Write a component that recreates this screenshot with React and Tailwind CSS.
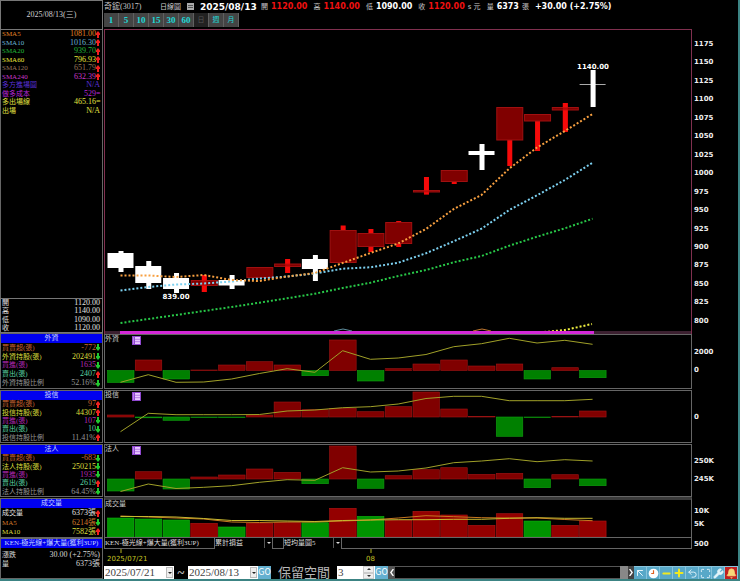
import { useState } from 'react'
import { ArrowUpLeft, Undo2, Maximize, Wrench, Bell, Minus, Plus } from 'lucide-react'

const SERIF = "font-['Liberation_Serif','Noto_Sans_CJK_TC',serif]"
const SANS = "font-['DejaVu_Sans','Noto_Sans_CJK_TC',sans-serif]"

// candle slots are shared by every plot
const STEP = 27.77
const cx = (i) => 120.5 + STEP * i
const points = (ys) => ys.map((y, i) => `${cx(i)},${y}`).join(' ')

const indicators = [
  ['SMA5', '1081.00', 'up', 'text-[#e08424]'],
  ['SMA10', '1016.30', 'up', 'text-[#69b4d4]'],
  ['SMA20', '939.70', 'up', 'text-[#20b838]'],
  ['SMA60', '796.93', 'up', 'text-[#e8e83c]'],
  ['SMA120', '651.79', 'up', 'text-[#96745a]'],
  ['SMA240', '632.39', 'up', 'text-[#c838c8]'],
  ['多方進場圖', 'N/A', '', 'text-[#5a30d8]'],
  ['做多成本', '529', 'eq', 'text-[#b828d8]'],
  ['多出場線', '465.16', 'eq', 'text-[#e0e040]'],
  ['出場', 'N/A', '', 'text-[#e0e040]'],
]

const prices = [
  ['開', '1120.00'],
  ['高', '1140.00'],
  ['低', '1090.00'],
  ['收', '1120.00'],
].map(([k, v]) => [k, v, null, 'text-[#e0e0e0]'])

const foreign = [
  ['買賣超(張)', '-772', 'down', 'text-[#c86432]'],
  ['外資持股(張)', '202491', 'down', 'text-[#dcdc3c]'],
  ['買進(張)', '1635', 'down', 'text-[#b428b4]'],
  ['賣出(張)', '2407', 'up', 'text-[#5ad2a0]'],
  ['外資持股比例', '52.16%', 'down', 'text-[#969696]'],
]

const trust = [
  ['買賣超(張)', '97', 'up', 'text-[#c86432]'],
  ['投信持股(張)', '44307', 'up', 'text-[#dcdc3c]'],
  ['買進(張)', '107', 'down', 'text-[#b428b4]'],
  ['賣出(張)', '10', 'down', 'text-[#5ad2a0]'],
  ['投信持股比例', '11.41%', 'up', 'text-[#969696]'],
]

const legal = [
  ['買賣超(張)', '-683', 'down', 'text-[#c86432]'],
  ['法人持股(張)', '250215', 'down', 'text-[#dcdc3c]'],
  ['買進(張)', '1935', 'down', 'text-[#b428b4]'],
  ['賣出(張)', '2619', 'up', 'text-[#5ad2a0]'],
  ['法人持股比例', '64.45%', 'down', 'text-[#969696]'],
]

const volume = [
  ['成交量', '6373張', 'up', 'text-[#e0e0e0]'],
  ['MA5', '6214張', 'down', 'text-[#d07828]'],
  ['MA10', '7582張', 'up', 'text-[#dcdc3c]'],
]

const strategy = [
  ['漲跌', '30.00 (+2.75%)', null, 'text-[#d8d8d8]'],
  ['量', '6373張', null, 'text-[#d8d8d8]'],
]

// [kind, body top, body bottom, high, low]
const candles = [
  ['w', 253, 268, 251, 272],
  ['w', 266, 283, 261, 289],
  ['w', 278, 289, 273, 293],
  ['r', 280, 286, 275, 292],
  ['w', 280, 285.5, 275, 289],
  ['r', 267, 278, 267, 278],
  ['r', 263.5, 267, 259, 273],
  ['w', 259, 269, 255, 281],
  ['r', 230, 263, 225.5, 263],
  ['r', 233, 247, 229, 252],
  ['r', 222, 244, 221, 247],
  ['r', 190, 192.5, 177, 194.5],
  ['r', 170, 182, 170, 184],
  ['w', 151, 155, 144, 170],
  ['r', 107, 140.5, 107, 166],
  ['r', 114, 121.5, 114, 151],
  ['r', 107, 110.5, 103, 132],
  ['w', 84, 85, 70, 107],
]

const sma5 = [275.5, 275.5, 277, 275, 280, 281, 276.5, 273, 263, 253, 243.5, 229, 209, 195, 168.5, 147.5, 131, 114]
const sma10 = [290.5, 287, 284.5, 283.5, 281.5, 278.5, 276.5, 273.5, 268.7, 267.3, 262.7, 253.3, 241.3, 228.7, 210, 195.3, 180, 162.7]
const sma20 = [323, 319, 315, 311, 307, 302.7, 298.3, 293.7, 288, 282.7, 276, 270, 262.3, 256, 245.7, 236.7, 228.3, 218.7]

const foreignBars = [382.5, 360, 379, 370, 365, 361.7, 365, 375.7, 340, 381, 368.7, 364, 360, 366, 364, 379, 367.7, 377.7]
const foreignLine = [382.3, 374.7, 382.3, 382, 379, 373.5, 368.7, 372.3, 350.7, 359.3, 358, 354.5, 346.7, 343.7, 338.3, 343, 340.3, 344.3]
const trustBars = [415, 417.8, 420.3, 417.5, 417.5, 415, 402, 409.7, 408.3, 411.7, 406.7, 392, 409, 416.4, 436.3, 417, 416.4, 411]
const trustLine = [431.7, 413.3, 414.7, 414.7, 414.7, 414.5, 411, 410, 407.7, 406.7, 404, 398.5, 396.3, 396.3, 400.7, 400.7, 400.7, 399.3]
const legalBars = [491, 471.7, 489, 477, 475, 469, 472.3, 483.7, 446, 488.3, 475.7, 469.7, 467.7, 474.3, 473.3, 487.7, 474.7, 485.7]
const legalLine = [491.5, 484, 488.5, 487.3, 485.7, 482.3, 479.7, 480.3, 467.7, 472, 471, 468, 462.7, 461, 458.7, 461.7, 459.7, 461]
const volumeTops = [518, 519, 520, 523.3, 527, 523.3, 522.7, 522.7, 508.3, 516.3, 520.3, 511.3, 515, 525.3, 513.7, 521, 525.3, 521]
const volumeKinds = 'GGGRGRRGRGRRRRRGRR'
const volumeMa5 = [516, 517, 518, 519, 522, 522.5, 522, 522, 521, 520, 518, 515.7, 516.7, 517.7, 518, 518, 519.5, 520.7]
const volumeMa10 = [516.5, 516.5, 517, 518.5, 520.5, 520.5, 521, 521.5, 520.5, 520, 519.7, 519.7, 519.3, 519.3, 518.3, 517.7, 518.3, 518.3]

function Trend({ dir }) {
  if (dir === 'eq') return <span className="w-1 text-center">=</span>
  if (!dir) return null
  return (
    <svg viewBox="0 0 4 7" className={dir === 'up' ? 'h-[7px] w-1 text-[#f02020]' : 'h-[7px] w-1 rotate-180 text-[#20c830]'}>
      <path d="M2 0 4 2.5V4H3V7H1V4H0V2.5Z" fill="currentColor" />
    </svg>
  )
}

function Rows({ items }) {
  return (
    <dl className="flex flex-1 flex-col justify-evenly">
      {items.map(([label, value, dir, color], i) => (
        <div key={i} className={`flex items-center justify-between pr-[2px] pl-px leading-[8px] whitespace-nowrap ${color}`}>
          <dt className="text-[7px]">{label}</dt>
          <dd className="flex items-center text-[8px]">
            {value}
            <Trend dir={dir} />
          </dd>
        </div>
      ))}
    </dl>
  )
}

function SideCard({ title, items, className }) {
  return (
    <section className={`flex shrink-0 flex-col border border-[#666] ${className}`}>
      <h2 className="h-[9px] shrink-0 overflow-hidden bg-[#0000f0] text-center text-[7px] leading-[9px] whitespace-nowrap text-[#c8d8ff]">{title}</h2>
      <Rows items={items} />
    </section>
  )
}

function Sidebar() {
  return (
    <aside className={`flex w-[103px] shrink-0 flex-col ${SERIF}`}>
      <div className="flex h-[30px] shrink-0 items-center justify-center border border-[#777] text-[8px] text-[#d0d0d0]">2025/08/13(三)</div>
      <section className="flex flex-1 flex-col border-x border-[#666]">
        <div className="flex h-[85px] flex-col">
          <Rows items={indicators} />
        </div>
      </section>
      <section className="flex h-[35px] shrink-0 flex-col border border-[#777]">
        <Rows items={prices} />
      </section>
      <SideCard title="外資" items={foreign} className="h-[56px]" />
      <SideCard title="投信" items={trust} className="mt-px h-[53px]" />
      <SideCard title="法人" items={legal} className="mt-px h-[53px]" />
      <SideCard title="成交量" items={volume} className="mt-px h-[40px]" />
      <section className="flex h-[41px] shrink-0 flex-col border border-[#666]">
        <h2 className="h-[9px] shrink-0 bg-[#0000f0] text-center text-[7px] leading-[9px] whitespace-nowrap text-[#c8d8ff]">KEN-極光線+爆大量(獲利3UP)</h2>
        <div className="mt-[3px] flex h-[17px] flex-col">
          <Rows items={strategy} />
        </div>
      </section>
    </aside>
  )
}

function Quote({ label, value, unit, red }) {
  return (
    <span className="flex items-center gap-[3px]">
      <span className="text-[7px] text-[#c8c8c8]">{label}</span>
      <b className={red ? 'text-[#f01010]' : 'text-white'}>{value}</b>
      {unit && <span className="text-[7px] text-[#c8c8c8]">{unit}</span>}
    </span>
  )
}

function Header({ period, setPeriod }) {
  return (
    <header className="flex h-[29px] shrink-0 flex-col whitespace-nowrap">
      <div className={`flex h-[13px] items-center gap-[6px] text-[8px] leading-[8px] ${SANS}`}>
        <h1 className={`w-[50px] text-[8px] text-[#c8c8c8] ${SERIF}`}>奇鋐(3017)</h1>
        <span className="text-[7px] text-[#d0d0d0]">日線圖</span>
        <svg viewBox="0 0 7 7" className="size-[7px]">
          <path d="M0 0h7v7H0z" fill="#aaa" />
          <path d="M1 2.5h5M1 4.5h5" stroke="#555" />
        </svg>
        <b className="w-[55px] text-[9px] text-white">2025/08/13</b>
        <Quote label="開" value="1120.00" red />
        <Quote label="高" value="1140.00" red />
        <Quote label="低" value="1090.00" />
        <Quote label="收" value="1120.00" unit="s 元" red />
        <Quote label="量" value="6373" unit="張" />
        <b className="text-white">+30.00 (+2.75%)</b>
      </div>
      <nav className="flex h-[14px]">
        {['1', '5', '10', '15', '30', '60', '日', '週', '月'].map((p) => (
          <button
            key={p}
            onClick={() => setPeriod(p)}
            className={`w-[15px] border-r border-[#606060] leading-[14px] ${SERIF} ${
              /\d/.test(p) ? 'text-[9px] font-bold' : 'text-[7px]'
            } ${p === period ? 'bg-[#222] text-[#555]' : 'bg-[#444] text-[#20d8d8]'}`}
          >
            {p}
          </button>
        ))}
      </nav>
    </header>
  )
}

function Axis({ labels, className }) {
  return (
    <div className={`flex w-[46px] shrink-0 flex-col pl-[2px] text-[7px] leading-[8px] font-bold text-[#eee] ${SANS} ${className}`}>
      {labels.map((l) => (
        <span key={l}>{l}</span>
      ))}
    </div>
  )
}

function PriceChart() {
  return (
    <div className="flex min-h-0 flex-1">
      <div className="min-w-0 flex-1 border border-b-0 border-[#80304f]">
        <svg viewBox="105 30 586 304" preserveAspectRatio="none" className="block h-full w-full">
          {candles.map(([kind, top, bottom, high, low], i) => (
            <g key={i}>
              {kind === 'w' ? (
                <>
                  <rect x={cx(i) - 13} y={top} width="26" height={bottom - top} fill={i === 17 ? '#aaa' : '#fff'} />
                  <rect x={cx(i) - 2} y={high} width="5" height={low - high} fill="#fff" />
                </>
              ) : (
                <>
                  <rect x={cx(i) - 2} y={high} width="5" height={low - high} fill="#f50a0a" />
                  <rect x={cx(i) - 12.5} y={top + 0.5} width="26" height={bottom - top - 1} fill="#800000" stroke="#a01010" strokeWidth="1" />
                  {bottom - top < 7 && <rect x={cx(i) - 2} y={high} width="5" height={low - high} fill="#f50a0a" fillOpacity="0.5" />}
                </>
              )}
            </g>
          ))}
          <g fill="none" strokeWidth="2" strokeDasharray="2 2">
            <polyline points={points(sma20)} stroke="#28c848" />
            <polyline points={points(sma10)} stroke="#7cd0f0" />
            <polyline points={points(sma5)} stroke="#f8a040" />
            <path d="M544 332 565 330 592 324" stroke="#f0f040" />
          </g>
          <path d="M105 332.5H691" stroke="#3c2030" strokeWidth="3" />
          <path d="M120 332.5H594" stroke="#d428d8" strokeWidth="3" />
          <path d="M334 331 343 329 352 331" stroke="#6090a0" fill="none" />
          <path d="M473 331 482 329 491 331" stroke="#c07830" fill="none" />
          <g fill="#fff" fontSize="7" fontWeight="bold" textAnchor="middle" fontFamily="DejaVu Sans, sans-serif">
            <text x="176" y="299">839.00</text>
            <text x="593" y="69">1140.00</text>
          </g>
        </svg>
      </div>
      <Axis
        className="justify-between pt-[11px] pb-[9px]"
        labels={[1175, 1150, 1125, 1100, 1075, 1050, 1025, 1000, 975, 950, 925, 900, 875, 850, 825, 800]}
      />
    </div>
  )
}

function FlowPanel({ title, base, bars, line, viewBox, labels, className, axisClass }) {
  return (
    <section className={`flex shrink-0 ${className}`}>
      <div className="relative min-w-0 flex-1 border border-[#666]">
        <svg viewBox={viewBox} preserveAspectRatio="none" className="block h-full w-full">
          {bars.map((y, i) => {
            const up = y < base
            return (
              <rect
                key={i}
                x={cx(i) - 13}
                y={Math.min(y, base)}
                width="26.5"
                height={Math.max(Math.abs(y - base), 0.6)}
                fill={up ? '#800000' : '#008000'}
                stroke={up ? '#a01414' : '#10a010'}
                strokeWidth="0.6"
              />
            )
          })}
          <polyline points={points(line)} fill="none" stroke="#a0a028" strokeWidth="1" />
        </svg>
        <div className="absolute top-0 left-0 flex items-start">
          <h3 className={`w-[27px] text-[7px] leading-[9px] text-[#ccc] ${SERIF}`}>{title}</h3>
          <button aria-label={`${title}明細`} className="mt-px">
            <svg viewBox="0 0 9 9" className="block size-[9px]">
              <path d="M0 0h9v9H0z" fill="#9048d0" />
              <path d="M3 1h5v7H3z" fill="#e8c8ff" />
              <path d="M3 3.3h5M3 5.7h5" stroke="#a868dc" strokeWidth="0.8" />
              <path d="M1.5 1v7" stroke="#c890f0" strokeWidth="0.8" />
            </svg>
          </button>
        </div>
      </div>
      <Axis labels={labels} className={axisClass} />
    </section>
  )
}

function VolumePanel() {
  return (
    <section className="flex h-[41px] shrink-0">
      <div className="relative min-w-0 flex-1 border border-t-[3px] border-[#666] border-t-[#3a3a3a]">
        <svg viewBox="105 500 586 37" preserveAspectRatio="none" className="block h-full w-full">
          {volumeTops.map((y, i) => (
            <rect
              key={i}
              x={cx(i) - 13}
              y={y}
              width="26.5"
              height={537 - y}
              fill={volumeKinds[i] === 'G' ? '#009400' : '#940000'}
              stroke={volumeKinds[i] === 'G' ? '#10b010' : '#b01414'}
              strokeWidth="0.6"
            />
          ))}
          <polyline points={points(volumeMa5)} fill="none" stroke="#c87820" strokeWidth="1" />
          <polyline points={points(volumeMa10)} fill="none" stroke="#c8b830" strokeWidth="1" />
        </svg>
        <h3 className={`absolute top-0 left-0 text-[7px] leading-[9px] text-[#ccc] ${SERIF}`}>成交量</h3>
      </div>
      <Axis labels={['10K', '5K']} className="gap-[5px] pt-[10px]" />
    </section>
  )
}

function MiniSelect({ label, value }) {
  return (
    <div className="relative h-full w-[59px] border-x border-[#666]">
      <select aria-label={label} className="h-full w-full appearance-none bg-black text-[7px] leading-[9px] text-[#ddd]">
        <option>{value}</option>
      </select>
      <span className="pointer-events-none absolute top-0 right-0 flex h-full w-[8px] items-center justify-center border-l border-[#555]">
        <svg viewBox="0 0 4 2" className="h-[2px] w-1"><path d="M0 0h4L2 2z" fill="#ddd" /></svg>
      </span>
    </div>
  )
}

function StrategyBar() {
  return (
    <section className="flex h-[11px] shrink-0">
      <div className={`flex flex-1 border border-t-0 border-[#666] text-[7px] leading-[10px] whitespace-nowrap text-[#ddd] ${SERIF}`}>
        <span className="w-[109px]">KEN-極光線+爆大量(獲利3UP)</span>
        <MiniSelect label="損益" value="累計損益" />
        <span className="w-[10px]" />
        <MiniSelect label="均量" value="短均量圖5" />
      </div>
      <Axis labels={['500']} className="pt-[2px]" />
    </section>
  )
}

function TimeAxis() {
  return (
    <div className="h-[17px] shrink-0 pr-[46px]">
      <svg viewBox="104 549 588 17" preserveAspectRatio="none" className="block h-full w-full">
        <path d="M121 549v4M371 549v4" stroke="#b4b420" />
        <g fill="#c4c424" fontSize="7" fontFamily="DejaVu Sans, sans-serif">
          <text x="107" y="561">2025/07/21</text>
          <text x="366" y="561">08</text>
        </g>
      </svg>
    </div>
  )
}

function DateBox({ label, value, onChange }) {
  return (
    <div className="flex w-[70px] bg-white">
      <input
        aria-label={label}
        value={value}
        onChange={(e) => onChange(e.target.value)}
        className="w-[62px] bg-white pl-px text-[11px] leading-[13px] text-[#444] outline-none"
      />
      <button aria-label={`選擇${label}`} className="my-px flex w-[7px] items-center justify-center border border-[#bbb] bg-[#eee]">
        <svg viewBox="0 0 4 2" className="h-[2px] w-1"><path d="M0 0h4L2 2z" fill="#222" /></svg>
      </button>
    </div>
  )
}

function GoButton() {
  return <button className={`w-[13px] bg-[#64b0d0] text-[8px] leading-[13px] text-white ${SANS}`}>GO</button>
}

function Tool({ label, children, className = 'bg-[#58a8c8] text-[#e4f4fa]' }) {
  return (
    <button aria-label={label} className={`flex w-[13px] shrink-0 items-center justify-center border-t border-r border-[#88c4dc] ${className}`}>
      {children}
    </button>
  )
}

function Toolbar() {
  const [from, setFrom] = useState('2025/07/21')
  const [to, setTo] = useState('2025/08/13')
  const [space, setSpace] = useState(3)
  const [scroll, setScroll] = useState(100)

  return (
    <footer className={`flex h-[13px] shrink-0 overflow-hidden whitespace-nowrap text-[#b8b8b8] ${SERIF}`}>
      <DateBox label="開始日期" value={from} onChange={setFrom} />
      <span className="w-[14px] text-center text-[13px] leading-[13px] font-bold">~</span>
      <DateBox label="結束日期" value={to} onChange={setTo} />
      <GoButton />
      <label htmlFor="space" className="px-[7px] text-[13px] leading-[13px]">保留空間</label>
      <div className="flex w-[38px] bg-white">
        <input
          id="space"
          value={space}
          onChange={(e) => setSpace(Number(e.target.value) || 0)}
          className="w-[26px] bg-white pl-px text-[11px] leading-[13px] text-[#444] outline-none"
        />
        <div className="flex w-[11px] flex-col">
          <button aria-label="增加" onClick={() => setSpace(space + 1)} className="flex flex-1 items-center justify-center border border-[#ccc] bg-[#eee]">
            <svg viewBox="0 0 4 2" className="h-[2px] w-1"><path d="M0 2h4L2 0z" fill="#333" /></svg>
          </button>
          <button aria-label="減少" onClick={() => setSpace(space - 1)} className="flex flex-1 items-center justify-center border border-[#ccc] bg-[#eee]">
            <svg viewBox="0 0 4 2" className="h-[2px] w-1"><path d="M0 0h4L2 2z" fill="#333" /></svg>
          </button>
        </div>
      </div>
      <GoButton />
      <button aria-label="往前" onClick={() => setScroll(0)} className="flex w-[7px] items-center justify-center bg-[#555]">
        <svg viewBox="0 0 4 7" className="h-[7px] w-1"><path d="M3.4 0 .8 3.5 3.4 7" stroke="#fff" strokeWidth="1.3" fill="none" /></svg>
      </button>
      <input
        type="range"
        aria-label="捲動"
        value={scroll}
        onChange={(e) => setScroll(Number(e.target.value))}
        className="h-[13px] min-w-0 flex-1 appearance-none border-y border-[#555] bg-black [&::-webkit-slider-thumb]:h-[13px] [&::-webkit-slider-thumb]:w-[8px] [&::-webkit-slider-thumb]:appearance-none [&::-webkit-slider-thumb]:bg-[#888]"
      />
      <button aria-label="往後" onClick={() => setScroll(100)} className="flex w-[6px] items-center justify-center bg-[#444]">
        <svg viewBox="0 0 4 7" className="h-[7px] w-1"><path d="M.6 0 3.2 3.5 .6 7" stroke="#fff" strokeWidth="1.3" fill="none" /></svg>
      </button>
      <Tool label="游標"><ArrowUpLeft size={12} /></Tool>
      <Tool label="時間">
        <svg viewBox="0 0 12 12" className="size-[11px]">
          <circle cx="6" cy="6" r="5.3" fill="#fff" />
          <path d="M6 2.5V6H3.5" stroke="#e06020" strokeWidth="1.3" fill="none" />
        </svg>
      </Tool>
      <Tool label="縮小"><Minus size={11} strokeWidth={4} className="text-[#f0e820]" /></Tool>
      <Tool label="放大"><Plus size={12} strokeWidth={4} className="text-[#f0e820]" /></Tool>
      <Tool label="復原"><Undo2 size={11} /></Tool>
      <Tool label="全螢幕">
        <Maximize size={11} />
      </Tool>
      <Tool label="設定"><Wrench size={11} fill="#e4f4fa" /></Tool>
      <Tool label="警示" className="bg-[#c02020] text-[#f8d878]"><Bell size={11} fill="#f8d878" /></Tool>
    </footer>
  )
}

export default function App() {
  const [period, setPeriod] = useState('日')

  return (
    <div className="flex h-screen overflow-hidden border-r-2 border-b-2 border-[#3c8484] bg-black">
      <Sidebar />
      <main className="ml-px flex min-w-0 flex-1 flex-col">
        <Header period={period} setPeriod={setPeriod} />
        <PriceChart />
        <FlowPanel
          title="外資"
          base={370.5}
          bars={foreignBars}
          line={foreignLine}
          viewBox="105 335 586 53"
          labels={['2000', '0']}
          className="h-[55px]"
          axisClass="gap-[10px] pt-[14px]"
        />
        <FlowPanel
          title="投信"
          base={417}
          bars={trustBars}
          line={trustLine}
          viewBox="105 391 586 51"
          labels={['0']}
          className="mt-px h-[53px]"
          axisClass="pt-[23px]"
        />
        <FlowPanel
          title="法人"
          base={479}
          bars={legalBars}
          line={legalLine}
          viewBox="105 445 586 51"
          labels={['250K', '245K']}
          className="mt-px h-[53px]"
          axisClass="gap-[10px] pt-[13px]"
        />
        <VolumePanel />
        <StrategyBar />
        <TimeAxis />
        <Toolbar />
      </main>
    </div>
  )
}
